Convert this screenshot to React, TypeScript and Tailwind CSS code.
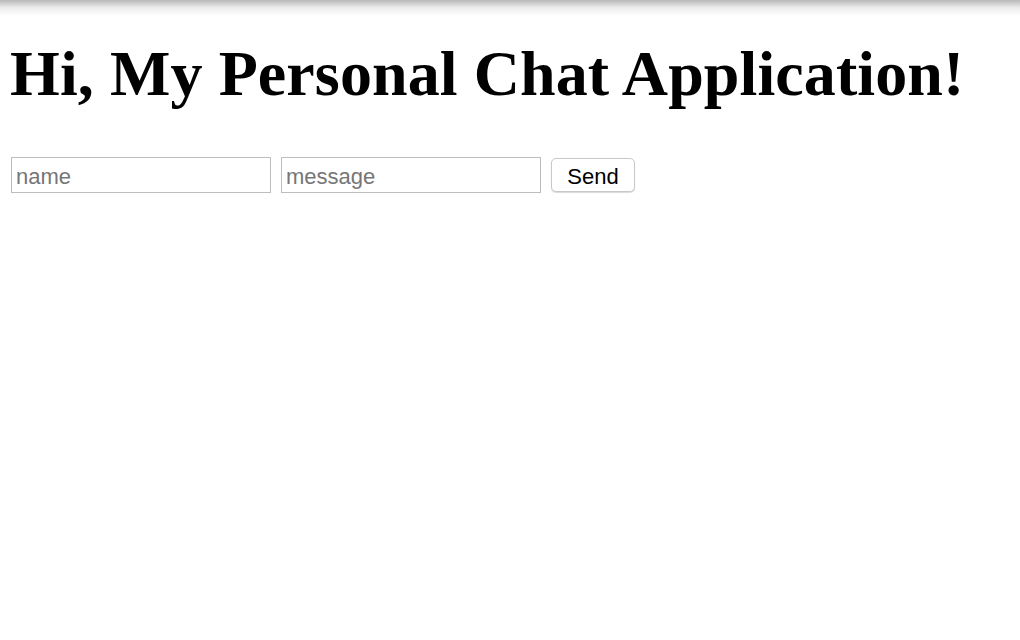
import React from "react";

export default function App() {
  return (
    <div className="min-h-[640px] w-full bg-white">
      <div className="h-[16px] w-full bg-gradient-to-b from-[#b8b8b8] via-[#eeeeee] to-white" />
      <div className="pl-[10px]">
        <h1
          className="mt-[21px] text-[64px] font-bold leading-[74px] tracking-[0.1px] text-black"
          style={{ fontFamily: '"Liberation Serif", "Times New Roman", serif' }}
        >
          Hi, My Personal Chat Application!
        </h1>
        <div
          className="mt-[46px] flex items-center gap-[10px] pl-[1px]"
          style={{ fontFamily: '"Liberation Sans", Arial, sans-serif' }}
        >
          <input
            placeholder="name"
            className="h-[36px] w-[260px] border border-[#bdbdbd] px-[4px] pt-[3px] text-[22px] text-black outline-none placeholder:text-[#767676]"
          />
          <input
            placeholder="message"
            className="h-[36px] w-[260px] border border-[#bdbdbd] px-[4px] pt-[3px] text-[22px] text-black outline-none placeholder:text-[#767676]"
          />
          <button className="h-[34px] w-[84px] rounded-[5px] border border-[#c8c8c8] bg-white pt-[3px] text-[22px] leading-none text-black shadow-[0_1px_1px_rgba(0,0,0,0.15)]">
            Send
          </button>
        </div>
      </div>
    </div>
  );
}
